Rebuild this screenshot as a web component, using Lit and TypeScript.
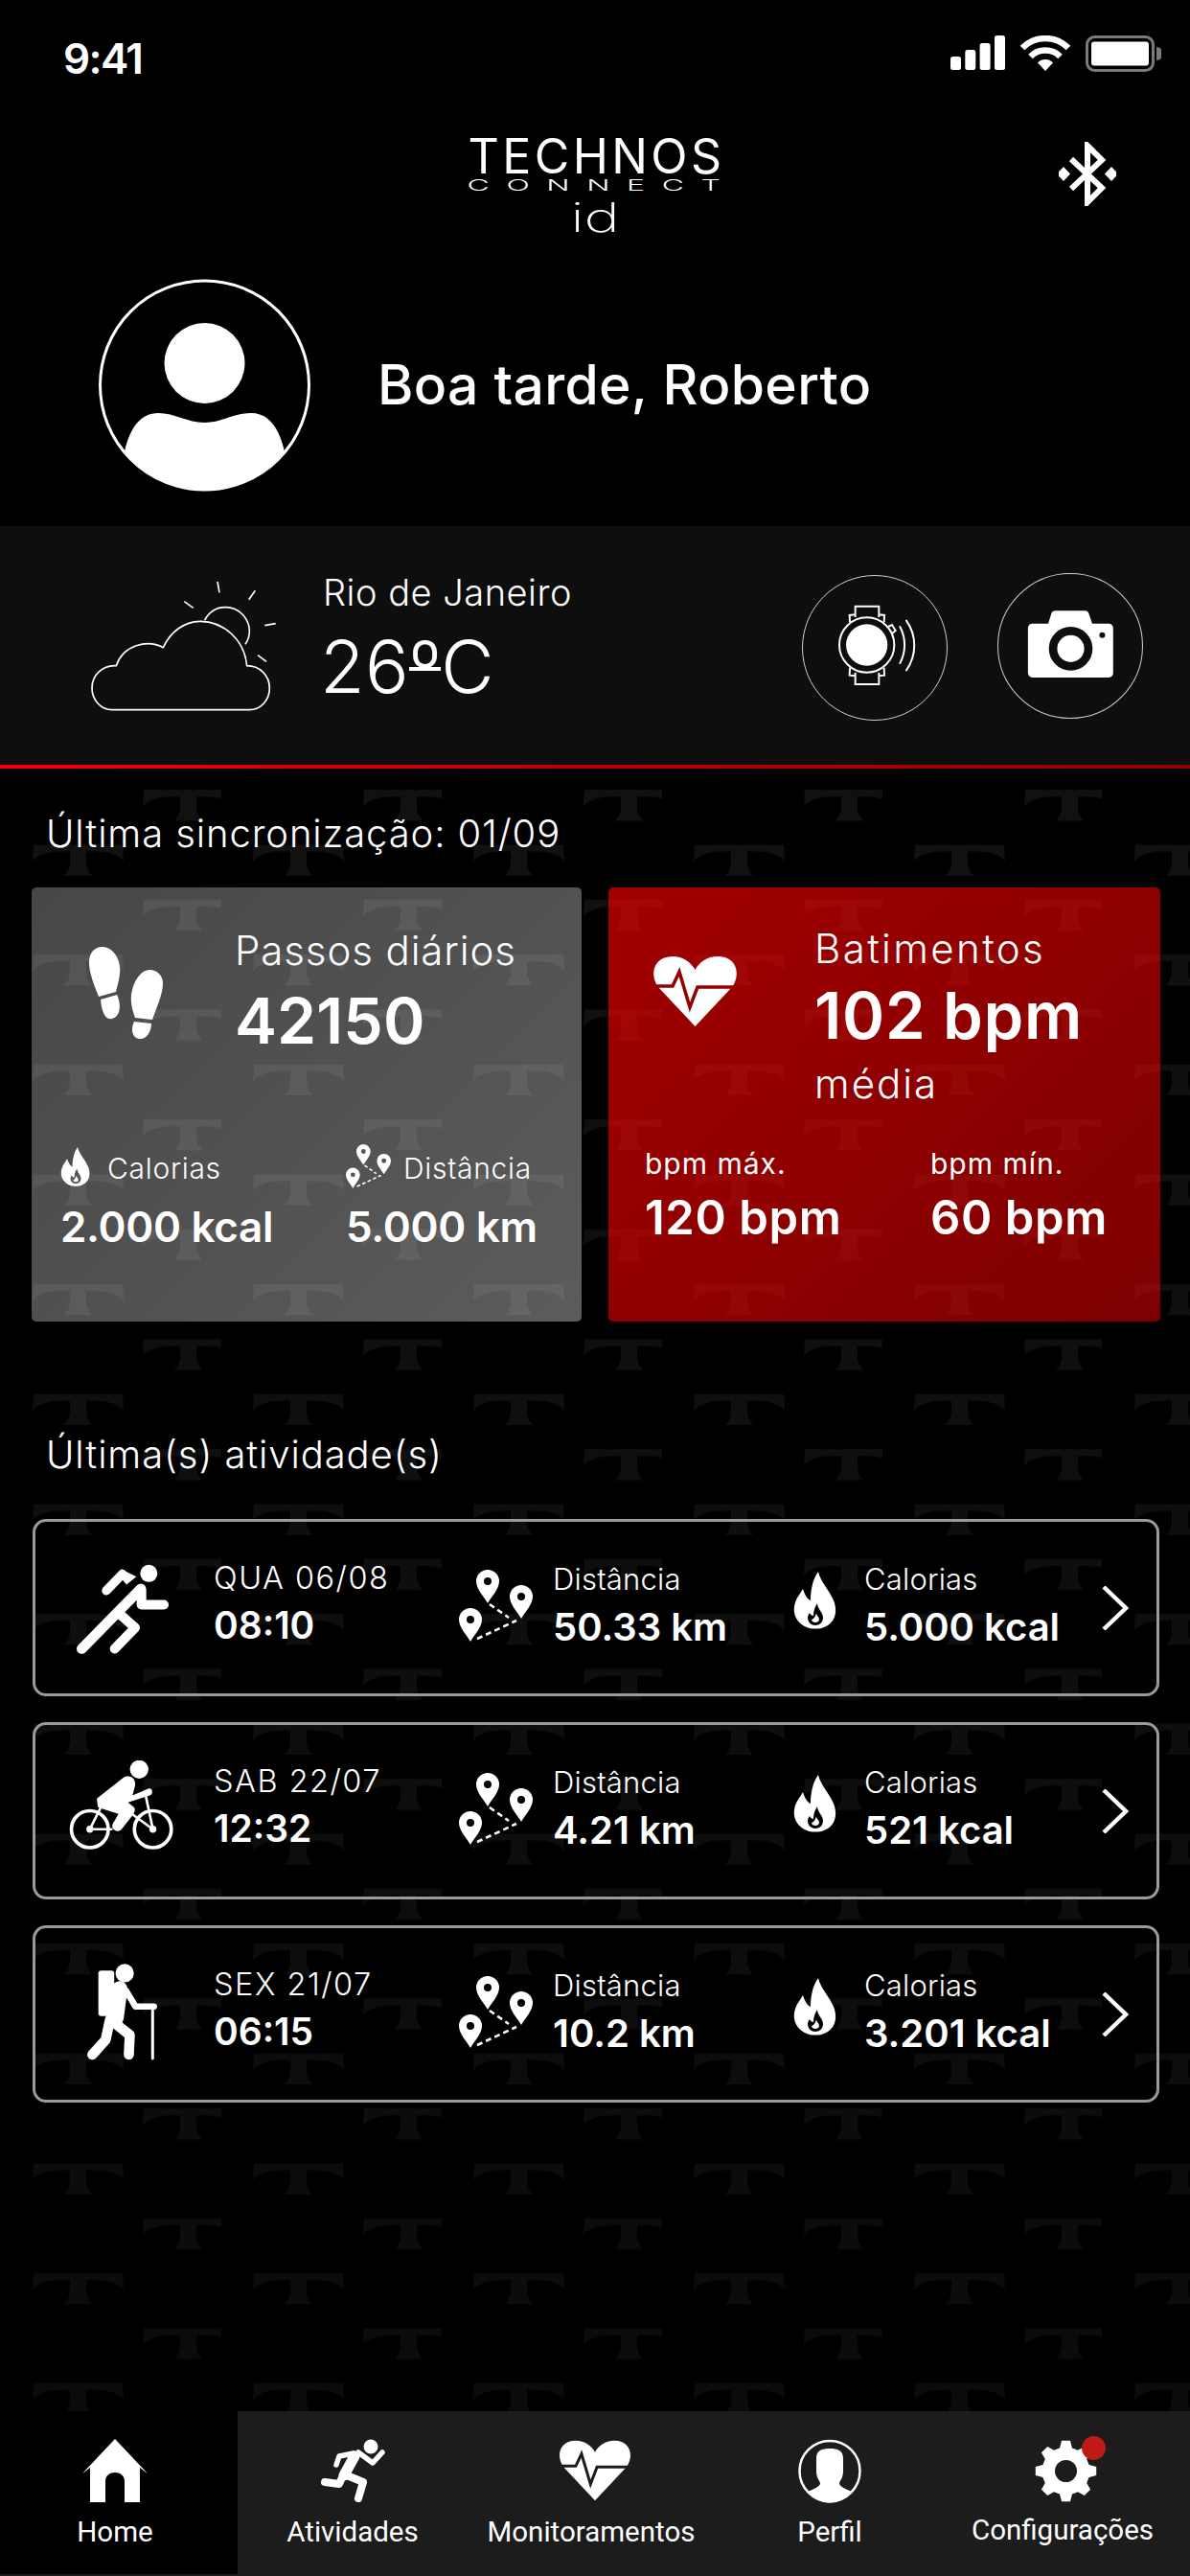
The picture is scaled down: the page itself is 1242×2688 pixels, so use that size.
import { LitElement, html, svg, css } from 'lit';
import { customElement } from 'lit/decorators.js';

// gear outline, 8 teeth, with the hole as a second subpath
function gearPath() {
  const c = 32.5;
  const pts: string[] = [];
  for (let i = 0; i < 8; i++) {
    const a = (i * 45 * Math.PI) / 180;
    [[-15, 25], [-8, 32], [8, 32], [15, 25]].forEach(([d, r]) => {
      const t = a + (d * Math.PI) / 180;
      pts.push(`${(c + r * Math.sin(t)).toFixed(1)} ${(c - r * Math.cos(t)).toFixed(1)}`);
    });
  }
  return `M${pts.join('L')}Z M21 32.5a11.5 11.5 0 1 0 23 0a11.5 11.5 0 1 0 -23 0Z`;
}

const pin = (x: number, y: number) => svg`
  <path transform="translate(${x} ${y})" fill-rule="evenodd" fill="#fff"
    d="M0 12a12 12 0 0 1 24 0c0 8-8 16-12 23c-4-7-12-15-12-23Zm8 0a4 4 0 1 0 8 0a4 4 0 1 0-8 0Z"/>`;

const routeIcon = (w: number, h: number) => html`
  <svg width=${w} height=${h} viewBox="0 0 77 75">
    ${pin(18, 0)}${pin(0, 40)}${pin(53, 16)}
    <path d="M32 36L52 50M19 72L60 53" stroke="#fff" stroke-width="2.6" stroke-dasharray="6 4" fill="none"/>
  </svg>`;

const flameIcon = (w: number, h: number) => html`
  <svg width=${w} height=${h} viewBox="0 0 46 60">
    <path fill="#fff" fill-rule="evenodd"
      d="M26 0C28 10 38 20 42 30C47 42 43 54 32 58C28 60 18 60 14 58C4 54-2 44 2 32C4 26 8 22 10 18C12 24 14 28 18 30C18 20 20 8 26 0Z
         M25 33C25 39 31 42 31 48C31 53 27 56 23 56C19 56 15 53 15 48C15 46 16 44 17 43C18 45 19 46 21 46C21 42 22 37 25 33Z
         M24 43C24 46 27 47 27 50C27 52 25 53 23 53C21 53 19 52 19 50C21 50 23 47 24 43Z"/>
  </svg>`;

const heartIcon = (w: number, h: number, cut: string, sw: number) => html`
  <svg width=${w} height=${h} viewBox="0 0 89 73">
    <path fill="#fff" d="M44.5 73L6 32C-3 20 0 0 21 0C32 0 40 6 44.5 14C49 6 57 0 68 0C89 0 92 20 83 32Z"/>
    <path fill="none" stroke=${cut} stroke-width=${sw} d="M-2 31H21L28 16L39 53L47 32H91"/>
  </svg>`;

const runnerIcon = html`
  <svg class="sport runner" width="100" height="97" viewBox="110 85 300 290" fill="none" stroke="#fff" stroke-linecap="round" stroke-linejoin="round">
    <circle cx="345" cy="120" r="27" fill="#fff" stroke="none"/>
    <path stroke-width="28" d="M212 174L262 122"/>
    <path fill="#fff" stroke="none" d="M258 106L306 130L275 155L250 125Z"/>
    <path stroke-width="32" d="M320 168L135 356"/>
    <path stroke-width="30" d="M322 172V218H392"/>
    <path stroke-width="30" d="M248 242L302 290L238 356"/>
  </svg>`;

const bikeIcon = html`
  <svg class="sport bike" width="110" height="93" viewBox="85 80 330 280" fill="none" stroke="#fff" stroke-linecap="round" stroke-linejoin="round">
    <circle cx="305" cy="108" r="29" fill="#fff" stroke="none"/>
    <circle cx="150" cy="296" r="58" stroke-width="11"/>
    <circle cx="348" cy="296" r="58" stroke-width="11"/>
    <path fill="#fff" stroke="none" d="M172 200L255 134C275 122 296 135 292 160L284 190L335 168C348 165 350 186 338 190L270 212L290 228C295 240 285 250 280 258L248 298C232 310 212 292 224 276L240 248L190 232L175 226Z"/>
    <path stroke-width="8" d="M150 296L185 226M150 296H218M325 188L348 296M285 250L348 296"/>
    <circle cx="150" cy="296" r="11" fill="#fff" stroke="none"/>
    <circle cx="348" cy="296" r="11" fill="#fff" stroke="none"/>
  </svg>`;

const hikerIcon = html`
  <svg class="sport hiker" width="73" height="101" viewBox="150 715 220 305" fill="none" stroke="#fff" stroke-linecap="round" stroke-linejoin="round">
    <circle cx="268" cy="745" r="29" fill="#fff" stroke="none"/>
    <rect x="185" y="737" width="50" height="143" rx="9" fill="#fff" stroke="none"/>
    <path stroke-width="50" d="M252 795L240 885"/>
    <path stroke-width="20" d="M272 800L302 850H360"/>
    <path stroke-width="9" d="M356 850V1014"/>
    <path stroke-width="32" d="M222 890L208 955L166 1002"/>
    <path stroke-width="32" d="M240 905L284 940L281 1002"/>
  </svg>`;

const chevron = html`
  <svg class="chev" width="28" height="46" viewBox="0 0 28 46" fill="none" stroke="#fff" stroke-width="4.4">
    <path d="M2 1L25 23L2 45"/>
  </svg>`;

interface Activity {
  icon: unknown;
  date: string;
  time: string;
  dist: string;
  kcal: string;
}

const ACTIVITIES: Activity[] = [
  { icon: runnerIcon, date: 'QUA 06/08', time: '08:10', dist: '50.33 km', kcal: '5.000 kcal' },
  { icon: bikeIcon, date: 'SAB 22/07', time: '12:32', dist: '4.21 km', kcal: '521 kcal' },
  { icon: hikerIcon, date: 'SEX 21/07', time: '06:15', dist: '10.2 km', kcal: '3.201 kcal' },
];

@customElement('app-root')
export class AppRoot extends LitElement {
  static styles = css`
    :host {
      display: block;
      width: 1242px;
      height: 2688px;
      background: #000;
      color: #fff;
      font-family: 'Inter', 'Liberation Sans', sans-serif;
      overflow: hidden;
    }
    .page { display: flex; flex-direction: column; height: 2688px; }
    svg { display: block; flex: none; }

    /* status bar */
    .status { height: 143px; flex: none; display: flex; align-items: flex-start; padding: 37px 30px 0 66px; box-sizing: border-box; }
    .clock { font-size: 44px; font-weight: 600; line-height: 48px; letter-spacing: -1.6px; }
    .status-icons { margin-left: auto; display: flex; gap: 15px; }

    /* logo row */
    .brand { height: 148px; flex: none; display: grid; grid-template-columns: 1fr 261px 1fr; }
    .logo { display: flex; flex-direction: column; align-items: center; font-weight: 400; }
    .logo-main { font-size: 50px; line-height: 40px; letter-spacing: 3.4px; padding-left: 3px; white-space: nowrap; }
    .logo-sub { font-size: 16px; line-height: 12px; margin-top: 4px; font-weight: 300; letter-spacing: 8.8px; transform: translateX(8px) scaleX(2); white-space: nowrap; }
    .logo-id { font-size: 42px; line-height: 32px; margin-top: 12px; font-weight: 200; transform: scaleX(1.5); }
    .bt { justify-self: end; margin: 5px 77px 0 0; }

    .greet { flex: none; height: 258px; display: flex; align-items: flex-start; padding-left: 103px; box-sizing: border-box; gap: 70px; }
    .greet-text { font-size: 57px; font-weight: 500; line-height: 70px; margin-top: 76px; letter-spacing: 0.35px; }

    /* weather band */
    .weather { flex: none; height: 249px; background: #0e0e0e; display: flex; box-sizing: border-box; padding: 54px 0 0 92px; }
    .weather-text { margin-left: 41px; margin-top: -6px; font-weight: 300; }
    .city { font-size: 38px; line-height: 42px; letter-spacing: 0.5px; }
    .temp { font-size: 76px; line-height: 84px; margin-top: 14px; margin-left: -3px; letter-spacing: 0.4px; }
    .deg { display: inline-block; height: 21px; line-height: 40px; border-bottom: 4px solid #fff; }
    .round-btns { margin-left: auto; display: flex; gap: 52px; padding-right: 49px; align-items: flex-start; margin-top: -3px; }
    .round-btns .cam { margin-top: -2px; }
    .rule { flex: none; height: 4px; background: linear-gradient(90deg, #f00000, #8a0000); }

    /* main area with the T pattern behind */
    .main { flex: 1; position: relative; overflow: hidden; }
    .pattern { position: absolute; inset: 0; width: 100%; height: 100%; }
    .content { position: relative; display: flex; flex-direction: column; }
    .heading { font-size: 40px; font-weight: 300; line-height: 50px; padding-left: 48px; letter-spacing: 0.9px; }
    .heading.sync { margin-top: 43px; }
    .heading.last { margin-top: 114px; }

    .cards { display: grid; grid-template-columns: 574px 576px; gap: 28px; padding-left: 33px; margin-top: 31px; }
    .card { height: 453px; border-radius: 5px; box-sizing: border-box; }
    .card.gray { background: linear-gradient(135deg, rgba(255,255,255,0.28), rgba(255,255,255,0.36)); }
    .card.red { background: linear-gradient(135deg, rgba(255,0,0,0.63), rgba(255,0,0,0.49)); }
    .card-top { display: flex; }
    .gray .card-top { padding: 41px 0 0 60px; }
    .gray .card-icon { margin: 21px 75px 0 0; }
    .red .card-top { padding: 39px 0 0 46px; }
    .red .card-icon { margin: 33px 80px 0 0; }
    .card-title { font-size: 42px; font-weight: 300; line-height: 50px; }
    .gray .card-title { letter-spacing: 0.9px; }
    .red .card-title { letter-spacing: 2.4px; }
    .card-big { font-weight: 600; line-height: 64px; }
    .gray .card-big { margin-top: 16px; font-size: 66px; letter-spacing: 0.1px; }
    .red .card-big { margin-top: 13px; font-size: 67px; letter-spacing: 0.7px; }
    .card-sub { font-size: 42px; font-weight: 300; line-height: 50px; margin-top: 14px; letter-spacing: 2px; }
    .card-cols { display: grid; grid-template-columns: 298px 1fr; }
    .gray .card-cols { margin-top: 97px; padding-left: 30px; }
    .red .card-cols { margin-top: 38px; padding-left: 38px; }
    .label-row { display: flex; align-items: center; height: 46px; font-size: 30px; font-weight: 300; letter-spacing: 0.7px; }
    .label-row span { padding-top: 4px; }
    .label-row.cal { gap: 17px; }
    .label-row.dist { gap: 13px; }
    .card-val { font-size: 44px; font-weight: 600; line-height: 50px; margin-top: 15px; letter-spacing: -0.3px; }
    .bpm-label { font-size: 30px; font-weight: 400; line-height: 40px; letter-spacing: 1px; }
    .bpm-val { font-size: 49px; font-weight: 600; line-height: 50px; margin-top: 12px; letter-spacing: 0.6px; }

    /* activity list */
    .list { display: flex; flex-direction: column; gap: 27px; padding: 0 32px 0 34px; margin-top: 42px; }
    .row { height: 185px; box-sizing: border-box; border: 3px solid #9a9a9a; border-radius: 14px; display: grid; grid-template-columns: 186px 256px 98px 251px 74px 248px 57px; align-items: start; }
    .sport-cell { display: flex; justify-content: center; padding-right: 6px; }
    .sport.runner { margin-top: 42px; }
    .sport.bike { margin-top: 37px; }
    .sport.hiker { margin-top: 37px; }
    .when { margin-top: 39px; }
    .when-date { font-size: 32.5px; font-weight: 300; line-height: 40px; letter-spacing: 1.5px; }
    .when-time { font-size: 39px; font-weight: 600; line-height: 44px; margin-top: 7px; letter-spacing: 0; }
    .stat { margin-top: 40px; }
    .stat-label { font-size: 31px; font-weight: 300; line-height: 40px; letter-spacing: 0.2px; }
    .stat-val { font-size: 40px; font-weight: 600; line-height: 44px; margin-top: 8px; letter-spacing: 0; }
    .route-cell { margin-top: 50px; }
    .flame-cell { margin-top: 52px; }
    .chev { margin-top: 67px; }

    /* bottom tabs */
    .nav { flex: none; height: 172px; background: #1c1c1c; display: grid; grid-template-columns: 248px 240px 258px 240px 256px; font-family: 'Roboto', 'Liberation Sans', sans-serif; font-size: 29.5px; }
    .tab { display: flex; flex-direction: column; align-items: center; height: 170px; box-sizing: border-box; padding-top: 28px; }
    .tab.home { background: #000; padding-right: 8px; }
    .tab.conf { padding-right: 10px; }
    .tab-icon { height: 68px; position: relative; display: flex; align-items: center; }
    .tab-icon.heart { margin-left: 8px; }
    .tab-icon.gear { margin-left: 6px; }
    .tab-label { line-height: 36px; margin-top: 12px; white-space: nowrap; }
    .conf .tab-label { margin-top: 10px; }
    .badge { position: absolute; top: -2px; right: -9px; width: 25px; height: 25px; border-radius: 50%; background: #c01a16; }
  `;

  renderStatus() {
    return html`
      <div class="status">
        <div class="clock">9:41</div>
        <div class="status-icons">
          <svg width="57" height="36" viewBox="0 0 57 36" fill="#fff">
            <rect x="0" y="22" width="11" height="14" rx="2.5"/>
            <rect x="15.3" y="15" width="11" height="21" rx="2.5"/>
            <rect x="30.6" y="8" width="11" height="28" rx="2.5"/>
            <rect x="46" y="0" width="11" height="36" rx="2.5"/>
          </svg>
          <svg width="54" height="37" viewBox="0 0 54 37" fill="none" stroke="#fff" stroke-width="6.5">
            <path d="M3 13A34 34 0 0 1 51 13"/>
            <path d="M11.5 22A22 22 0 0 1 42.5 22"/>
            <path fill="#fff" stroke="none" d="M19 28.5A11 11 0 0 1 35 28.5L27 37Z"/>
          </svg>
          <svg width="79" height="38" viewBox="0 0 79 38">
            <rect x="1.5" y="1.5" width="69" height="35" rx="8" fill="none" stroke="#7a7a7a" stroke-width="3"/>
            <rect x="6" y="6.5" width="60" height="25" rx="3" fill="#fff"/>
            <path d="M74 12a7 7 0 0 1 0 14Z" fill="#7a7a7a"/>
          </svg>
        </div>
      </div>`;
  }

  renderBrand() {
    return html`
      <div class="brand">
        <div></div>
        <div class="logo">
          <div class="logo-main">TECHNOS</div>
          <div class="logo-sub">CONNECT</div>
          <div class="logo-id">id</div>
        </div>
        <svg class="bt" width="60" height="67" viewBox="0 0 60 67" fill="none" stroke="#fff" stroke-width="6">
          <path d="M13 18L45 48L30 63V4L45 19L13 49"/>
          <path fill="#fff" stroke="none" d="M5 26L12 33.5L5 41L-2 33.5ZM55 26L62 33.5L55 41L48 33.5Z"/>
        </svg>
      </div>`;
  }

  renderGreeting() {
    return html`
      <div class="greet">
        <svg width="221" height="222" viewBox="0 0 221 222">
          <defs><clipPath id="av"><circle cx="110.5" cy="111" r="109"/></clipPath></defs>
          <circle cx="110.5" cy="88" r="42" fill="#fff"/>
          <path clip-path="url(#av)" fill="#fff" d="M22 222C24 175 34 140 62 140C80 140 92 150 110.5 150C129 150 141 140 159 140C187 140 197 175 199 222Z"/>
          <circle cx="110.5" cy="111" r="109" fill="none" stroke="#fff" stroke-width="3"/>
        </svg>
        <div class="greet-text">Boa tarde, Roberto</div>
      </div>`;
  }

  renderWeather() {
    return html`
      <div class="weather">
        <svg width="204" height="143" viewBox="95 40 612 429" fill="none" stroke="#fff" stroke-width="5">
          <path d="M170 453H600C636 453 663 422 663 385C663 345 632 315 592 315C585 235 520 176 445 176C395 176 352 210 330 258C280 232 205 250 183 315C140 312 107 345 107 385C107 422 135 453 170 453Z"/>
          <path d="M460 172C475 145 500 132 525 132C568 132 600 168 600 207C600 222 595 236 587 248"/>
          <path d="M500 52L506 86M618 80L598 108M682 183L648 189M626 282L653 302M396 114L424 134"/>
        </svg>
        <div class="weather-text">
          <div class="city">Rio de Janeiro</div>
          <div class="temp">26<span class="deg">º</span>C</div>
        </div>
        <div class="round-btns">
          <svg width="152" height="152" viewBox="115 60 456 456" fill="none" stroke="#fff">
            <circle cx="343" cy="288" r="226.5" stroke="#cfcfcf" stroke-width="3"/>
            <path stroke-width="6" d="M282 192V158H356V192M282 366V402H356V366M265 208L264 186L282 184M372 208L373 186L356 184M265 350L264 374L282 376M372 350L373 374L356 376"/>
            <circle cx="318" cy="279" r="86" stroke-width="6"/>
            <circle cx="318" cy="279" r="65" fill="#fff" stroke="none"/>
            <path stroke-width="6" d="M385 222L397 216L408 234L397 243"/>
            <path stroke-width="6" stroke-linecap="round" d="M422 222C441 258 441 300 422 336M442 203C475 250 475 310 442 358"/>
          </svg>
          <svg class="cam" width="152" height="152" viewBox="725 55 453 453" fill="none">
            <circle cx="951.5" cy="281.5" r="225" stroke="#cfcfcf" stroke-width="3"/>
            <path fill="#fff" d="M834 212H883L893 180C895 175 899 172 905 172H998C1003 172 1007 175 1009 180L1020 212H1071C1079 212 1085 218 1085 226V366C1085 374 1079 380 1071 380H834C826 380 820 374 820 366V226C820 218 826 212 834 212Z"/>
            <circle cx="953" cy="290" r="55" stroke="#0e0e0e" stroke-width="26"/>
            <circle cx="1051" cy="248" r="9" fill="#0e0e0e"/>
          </svg>
        </div>
      </div>
      <div class="rule"></div>`;
  }

  renderCards() {
    return html`
      <div class="cards">
        <div class="card gray">
          <div class="card-top">
            <svg class="card-icon" width="77" height="97" viewBox="0 0 77 97" fill="#fff">
              <path d="M14 0C25 0 34 14 32 28C31 37 29 42 28 47L10 52C6 42 0 28 0 16C0 6 6 0 14 0Z"/>
              <path d="M12 55L29 50C33 58 34 72 24 75C16 77 13 66 12 55Z"/>
              <path d="M63 24C54 24 46 36 44 50C43 60 46 68 48 74L66 76C70 64 77 50 77 38C77 30 71 24 63 24Z"/>
              <path d="M47 78L65 80C65 88 60 97 52 96C45 95 43 86 47 78Z"/>
            </svg>
            <div>
              <div class="card-title">Passos diários</div>
              <div class="card-big">42150</div>
            </div>
          </div>
          <div class="card-cols">
            <div>
              <div class="label-row cal">${flameIcon(32, 41)}<span>Calorias</span></div>
              <div class="card-val">2.000 kcal</div>
            </div>
            <div>
              <div class="label-row dist">${routeIcon(47, 46)}<span>Distância</span></div>
              <div class="card-val">5.000 km</div>
            </div>
          </div>
        </div>
        <div class="card red">
          <div class="card-top">
            <div class="card-icon">${heartIcon(89, 73, '#950000', 3.5)}</div>
            <div>
              <div class="card-title">Batimentos</div>
              <div class="card-big">102 bpm</div>
              <div class="card-sub">média</div>
            </div>
          </div>
          <div class="card-cols">
            <div>
              <div class="bpm-label">bpm máx.</div>
              <div class="bpm-val">120 bpm</div>
            </div>
            <div>
              <div class="bpm-label">bpm mín.</div>
              <div class="bpm-val">60 bpm</div>
            </div>
          </div>
        </div>
      </div>`;
  }

  renderActivity(a: Activity) {
    return html`
      <div class="row">
        <div class="sport-cell">${a.icon}</div>
        <div class="when">
          <div class="when-date">${a.date}</div>
          <div class="when-time">${a.time}</div>
        </div>
        <div class="route-cell">${routeIcon(77, 75)}</div>
        <div class="stat">
          <div class="stat-label">Distância</div>
          <div class="stat-val">${a.dist}</div>
        </div>
        <div class="flame-cell">${flameIcon(46, 60)}</div>
        <div class="stat">
          <div class="stat-label">Calorias</div>
          <div class="stat-val">${a.kcal}</div>
        </div>
        ${chevron}
      </div>`;
  }

  renderNav() {
    return html`
      <nav class="nav">
        <div class="tab home">
          <div class="tab-icon">
            <svg width="68" height="66" viewBox="0 0 68 66" fill="#fff">
              <path d="M34 0L68 36L60 30V66H44V44C44 32 24 32 24 44V66H8V30L0 36Z"/>
            </svg>
          </div>
          <div class="tab-label">Home</div>
        </div>
        <div class="tab">
          <div class="tab-icon">
            <svg width="69" height="66" viewBox="0 0 69 66" fill="none" stroke="#fff" stroke-linecap="round" stroke-linejoin="round">
              <circle cx="53" cy="8" r="7.5" fill="#fff" stroke="none"/>
              <path stroke-width="11" d="M36 18L25 38"/>
              <path stroke-width="5.5" d="M40 14L55 25L65 14M35 15L20 18L17 27"/>
              <path stroke-width="8" d="M24 38L20 47L5 45M28 38L45 45L40 62"/>
            </svg>
          </div>
          <div class="tab-label">Atividades</div>
        </div>
        <div class="tab">
          <div class="tab-icon heart">${heartIcon(76, 66, '#1c1c1c', 3.5)}</div>
          <div class="tab-label">Monitoramentos</div>
        </div>
        <div class="tab">
          <div class="tab-icon">
            <svg width="66" height="67" viewBox="0 0 66 67">
              <circle cx="33" cy="33.5" r="31.5" fill="none" stroke="#fff" stroke-width="2.5"/>
              <path fill="#fff" d="M19 20C19 12 25 10 33 10C41 10 47 12 47 20L47 34C47 40 44 43 43 46C43 50 50 52 56 55A28.5 28.5 0 0 1 10 55C16 52 23 50 23 46C22 43 19 40 19 34Z"/>
            </svg>
          </div>
          <div class="tab-label">Perfil</div>
        </div>
        <div class="tab conf">
          <div class="tab-icon gear">
            <svg width="65" height="65" viewBox="0 0 65 65"><path fill="#fff" fill-rule="evenodd" d=${gearPath()}/></svg>
            <span class="badge"></span>
          </div>
          <div class="tab-label">Configurações</div>
        </div>
      </nav>`;
  }

  render() {
    return html`
      <div class="page">
        ${this.renderStatus()}
        ${this.renderBrand()}
        ${this.renderGreeting()}
        ${this.renderWeather()}
        <div class="main">
          <svg class="pattern">
            <defs>
              <path id="t" fill="#111" d="M1 0H94L95 17C88 8 72 6 56 7V20Q57 27 62 32H33Q38 27 39 20V7C23 6 7 8 0 17Z"/>
              <pattern id="tiles" width="230" height="114.67" patternUnits="userSpaceOnUse">
                <use href="#t" x="34" y="79.6"/>
                <use href="#t" x="149" y="22.3"/>
              </pattern>
              <linearGradient id="fade" x1="0" y1="0" x2="0" y2="1">
                <stop offset="0" stop-color="#000" stop-opacity="0"/>
                <stop offset="1" stop-color="#000" stop-opacity="0.35"/>
              </linearGradient>
            </defs>
            <rect width="100%" height="100%" fill="url(#tiles)"/>
            <rect width="100%" height="100%" fill="url(#fade)"/>
          </svg>
          <div class="content">
            <div class="heading sync">Última sincronização: 01/09</div>
            ${this.renderCards()}
            <div class="heading last">Última(s) atividade(s)</div>
            <div class="list">${ACTIVITIES.map(a => this.renderActivity(a))}</div>
          </div>
        </div>
        ${this.renderNav()}
      </div>
    `;
  }
}
